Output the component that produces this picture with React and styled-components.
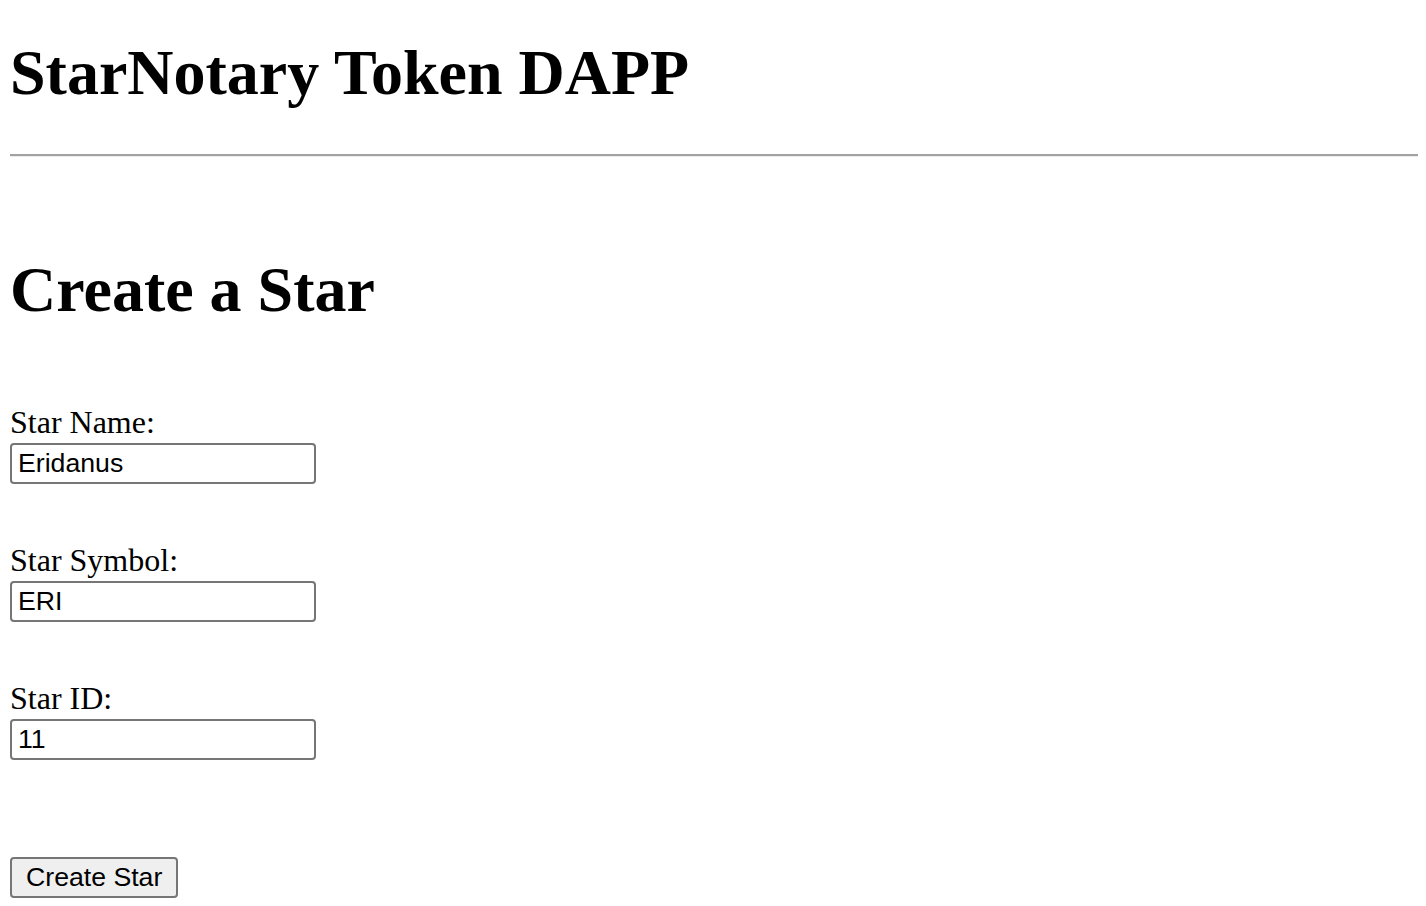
import React from 'react';
import styled, { createGlobalStyle } from 'styled-components';

const GlobalStyle = createGlobalStyle`
  body {
    margin: 0;
    background: #fff;
    color: #000;
    font-family: "Liberation Serif", "Times New Roman", serif;
  }
`;

const Page = styled.div`
  display: flex;
  flex-direction: column;
  align-items: flex-start;
  padding: 0 8px 40px 10px;
`;

const Title = styled.h1`
  margin: ${({ top }) => top}px 0 0 0;
  font-size: 64px;
  line-height: 74px;
  font-weight: bold;
`;

const Divider = styled.hr`
  align-self: stretch;
  margin: 44px 0 0 0;
  height: 0;
  border: none;
  border-top: 2px solid #a2a2a2;
  border-bottom: 1px solid #ececec;
`;

const Field = styled.div`
  display: flex;
  flex-direction: column;
  align-items: flex-start;
  margin-top: ${({ top }) => top}px;
`;

const FieldLabel = styled.label`
  font-size: 32px;
  line-height: 37px;
`;

const TextInput = styled.input`
  box-sizing: border-box;
  margin-top: 2px;
  width: 306px;
  height: 41px;
  padding: 0 6px;
  border: 2px solid #767676;
  border-radius: 4px;
  background: #fff;
  color: #000;
  font-family: "Liberation Sans", Arial, sans-serif;
  font-size: 26.67px;
  outline: none;
`;

const SubmitButton = styled.button`
  box-sizing: border-box;
  margin-top: 97px;
  height: 41px;
  padding: 0 14px;
  border: 2px solid #767676;
  border-radius: 4px;
  background: #efefef;
  color: #000;
  font-family: "Liberation Sans", Arial, sans-serif;
  font-size: 26.67px;
  cursor: pointer;
`;

const fields = [
  { label: 'Star Name:', value: 'Eridanus', top: 77 },
  { label: 'Star Symbol:', value: 'ERI', top: 58 },
  { label: 'Star ID:', value: '11', top: 58 },
];

const App = () => (
  <>
    <GlobalStyle />
    <Page>
      <Title top={36}>StarNotary Token DAPP</Title>
      <Divider />
      <Title top={96}>Create a Star</Title>
      {fields.map((f) => (
        <Field key={f.label} top={f.top}>
          <FieldLabel>{f.label}</FieldLabel>
          <TextInput type="text" defaultValue={f.value} />
        </Field>
      ))}
      <SubmitButton>Create Star</SubmitButton>
    </Page>
  </>
);

export default App;
